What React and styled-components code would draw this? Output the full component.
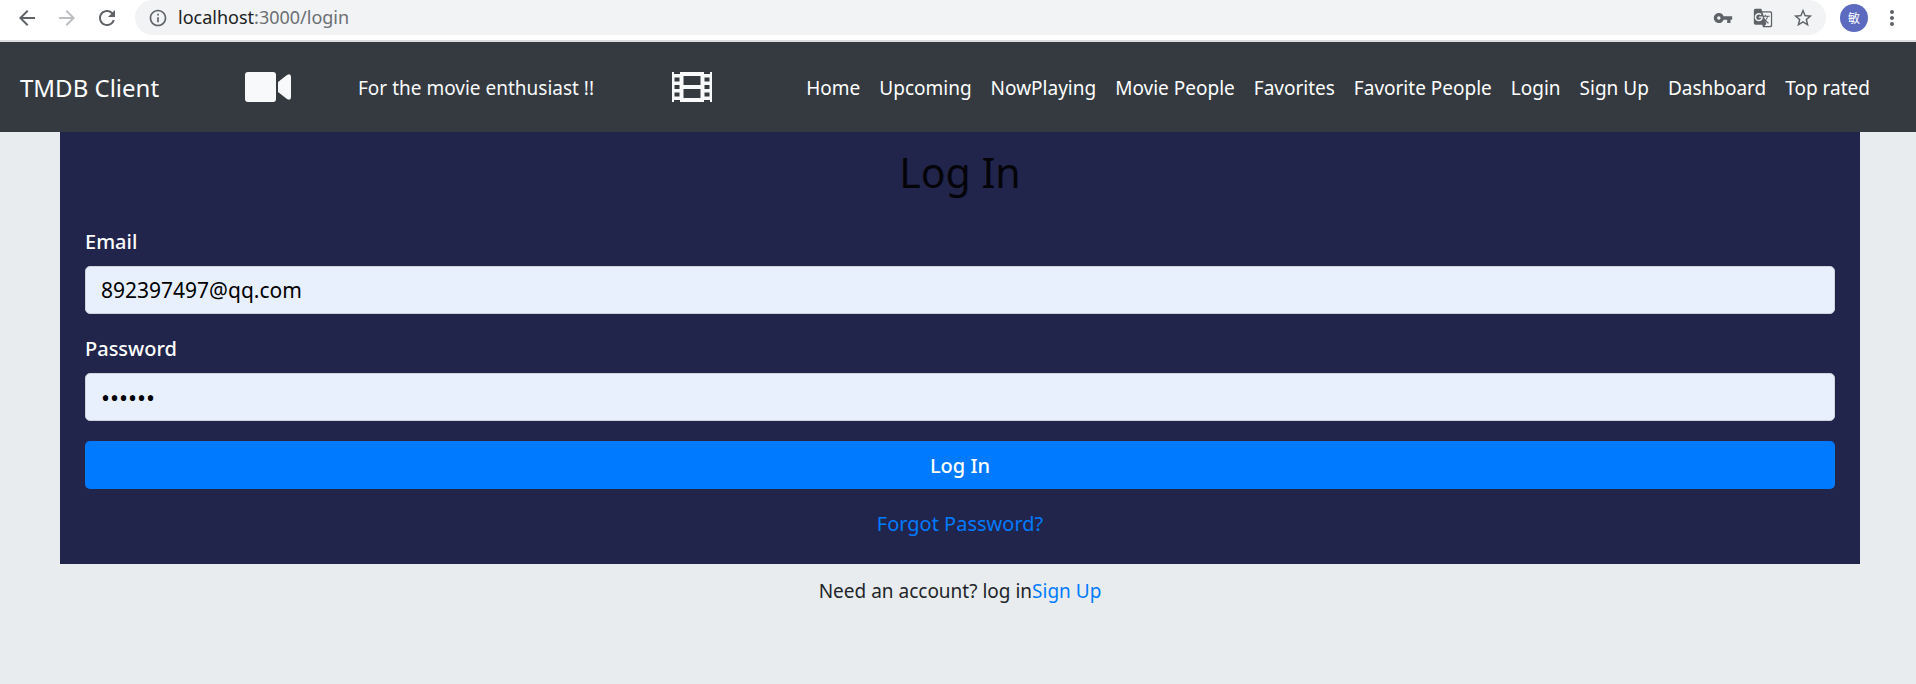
import React from "react";
import styled, { createGlobalStyle } from "styled-components";
import {
  MdArrowBack,
  MdArrowForward,
  MdRefresh,
  MdInfoOutline,
  MdVpnKey,
  MdGTranslate,
  MdStarBorder,
  MdMoreVert,
} from "react-icons/md";

const GlobalStyle = createGlobalStyle`
  *, *::before, *::after { box-sizing: border-box; }
  body {
    margin: 0;
    background: #e8ecef;
    color: #212529;
    font-family: "Noto Sans", "Noto Sans CJK SC", sans-serif;
    font-size: 19px;
    line-height: 30px;
  }
`;

const Page = styled.div`
  min-height: 100vh;
`;

const BrowserBar = styled.header`
  display: flex;
  align-items: flex-start;
  height: 42px;
  padding-left: 15px;
  background: #fff;
  border-bottom: 2px solid #dadce0;
`;

const IconButton = styled.button`
  display: flex;
  align-items: center;
  justify-content: center;
  flex: none;
  width: ${(p) => p.$width || 40}px;
  height: 35px;
  padding: 0;
  border: 0;
  background: transparent;
  color: ${(p) => (p.$muted ? "#bcbec1" : "#5f6368")};
  font-size: ${(p) => p.$size || 24}px;
`;

const AddressBar = styled.div`
  display: flex;
  align-items: center;
  flex: 1;
  min-width: 0;
  height: 35px;
  margin-left: 16px;
  padding: 0 3px;
  background: #f1f3f4;
  border-radius: 18px;
`;

const Url = styled.div`
  flex: 1;
  color: #6b6f73;
  font-size: 18px;
  line-height: 35px;
  white-space: nowrap;
`;

const UrlHost = styled.span`
  color: #202124;
`;

const Avatar = styled.button`
  flex: none;
  width: 28px;
  height: 28px;
  margin: 4px 0 0 14px;
  padding: 0;
  border: 0;
  border-radius: 50%;
  background: #5c6bc0;
  color: #fff;
  font-family: "Noto Sans CJK SC", sans-serif;
  font-size: 12px;
  line-height: 28px;
`;

const Navbar = styled.nav`
  display: flex;
  align-items: center;
  height: 90px;
  padding: 0 46px 0 20px;
  background: #343a40;
  color: #f8f9fa;
  white-space: nowrap;
`;

const Brand = styled.a`
  width: 225px;
  padding-top: 2px;
  color: #fff;
  font-size: 24px;
  text-decoration: none;
`;

const NavIcon = styled.svg`
  flex: none;
  width: ${(p) => p.$width}px;
  height: 30px;
  fill: #f8f9fa;
`;

const Tagline = styled.span`
  width: 314px;
  margin-left: 67px;
  padding-top: 2px;
`;

const NavLinks = styled.div`
  display: flex;
  gap: 19px;
  margin-left: auto;
  padding-top: 2px;
`;

const NavLink = styled.a`
  color: #fff;
  text-decoration: none;
`;

const Main = styled.main`
  padding: 0 56px 0 60px;
`;

const Card = styled.form`
  padding: 15px 25px;
  padding-bottom: 25px;
  background: #22254b;
`;

const Title = styled.h2`
  margin: 0 0 30px;
  color: #040409;
  font-size: 41px;
  font-weight: 400;
  line-height: 50px;
  text-align: center;
`;

const Field = styled.div`
  margin-bottom: 20px;
`;

const Label = styled.label`
  display: block;
  margin-bottom: 9px;
  color: #fff;
  font-size: 20px;
  font-weight: 500;
`;

const Input = styled.input`
  display: block;
  width: 100%;
  height: 48px;
  padding: 0 15px;
  border: 1px solid #ced4da;
  border-radius: 5px;
  background: #e8f0fe;
  color: #000;
  font-family: inherit;
  font-size: ${(p) => (p.type === "password" ? 24 : 21)}px;
`;

const Submit = styled.button`
  display: block;
  width: 100%;
  height: 48px;
  padding: 0;
  border: 0;
  border-radius: 5px;
  background: #007bff;
  color: #fff;
  font-family: inherit;
  font-size: 20px;
  font-weight: 500;
`;

const Forgot = styled.div`
  margin-top: 20px;
  font-size: 20px;
  text-align: center;
`;

const Link = styled.a`
  color: #007bff;
  text-decoration: none;
`;

const AccountNote = styled.div`
  margin-top: 12px;
  text-align: center;
`;

const links = [
  "Home",
  "Upcoming",
  "NowPlaying",
  "Movie People",
  "Favorites",
  "Favorite People",
  "Login",
  "Sign Up",
  "Dashboard",
  "Top rated",
];

function CameraIcon() {
  return (
    <NavIcon $width={46} viewBox="0 0 46 30" aria-hidden="true">
      <rect width="31" height="30" rx="3" />
      <path d="M33 10 L42 3 Q46 1 46 5 V25 Q46 29 42 27 L33 20 Z" />
    </NavIcon>
  );
}

function FilmIcon() {
  return (
    <NavIcon $width={40} viewBox="0 0 40 30" aria-hidden="true">
      <path
        fillRule="evenodd"
        d="M0 0H2V2H8V0H32V2H38V0H40V30H38V28H32V30H8V28H2V30H0Z
           M2.5 5.5V9.5H7.5V5.5Z M2.5 13V17H7.5V13Z M2.5 20.5V24.5H7.5V20.5Z
           M32.5 5.5V9.5H37.5V5.5Z M32.5 13V17H37.5V13Z M32.5 20.5V24.5H37.5V20.5Z
           M11.5 4V13H28.5V4Z M11.5 17V26H28.5V17Z"
      />
    </NavIcon>
  );
}

export default function App() {
  return (
    <Page>
      <GlobalStyle />
      <BrowserBar>
        <IconButton $width={24} aria-label="Back"><MdArrowBack /></IconButton>
        <IconButton $width={56} $muted aria-label="Forward"><MdArrowForward /></IconButton>
        <IconButton $width={24} aria-label="Reload"><MdRefresh /></IconButton>
        <AddressBar>
          <IconButton $size={20} aria-label="Site information"><MdInfoOutline /></IconButton>
          <Url><UrlHost>localhost</UrlHost>:3000/login</Url>
          <IconButton $size={20} aria-label="Passwords"><MdVpnKey /></IconButton>
          <IconButton $size={20} aria-label="Translate"><MdGTranslate /></IconButton>
          <IconButton $size={22} aria-label="Bookmark"><MdStarBorder /></IconButton>
        </AddressBar>
        <Avatar>敏</Avatar>
        <IconButton $width={48} aria-label="Menu"><MdMoreVert /></IconButton>
      </BrowserBar>
      <Navbar>
        <Brand href="#">TMDB Client</Brand>
        <CameraIcon />
        <Tagline>For the movie enthusiast !!</Tagline>
        <FilmIcon />
        <NavLinks>
          {links.map((name) => (
            <NavLink key={name} href="#">{name}</NavLink>
          ))}
        </NavLinks>
      </Navbar>
      <Main>
        <Card>
          <Title>Log In</Title>
          <Field>
            <Label htmlFor="email">Email</Label>
            <Input id="email" type="email" defaultValue="892397497@qq.com" />
          </Field>
          <Field>
            <Label htmlFor="password">Password</Label>
            <Input id="password" type="password" defaultValue="123456" />
          </Field>
          <Submit type="button">Log In</Submit>
          <Forgot><Link href="#">Forgot Password?</Link></Forgot>
        </Card>
        <AccountNote>
          Need an account? log in<Link href="#">Sign Up</Link>
        </AccountNote>
      </Main>
    </Page>
  );
}
